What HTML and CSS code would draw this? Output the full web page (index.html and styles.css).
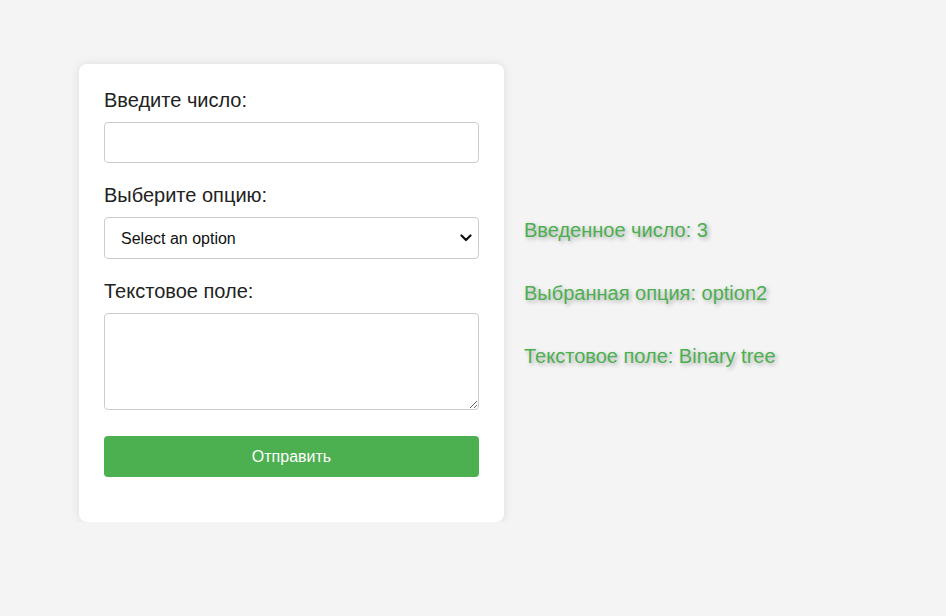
FILE: index.html
```html
<!DOCTYPE html>
<html lang="ru">
<head>
<meta charset="utf-8">
<title>Форма</title>
<link rel="stylesheet" href="styles.css">
</head>
<body>
<div class="page">
  <form class="card">
    <label class="label" for="num">Введите число:</label>
    <input class="field" id="num" type="number">
    <label class="label" for="opt">Выберите опцию:</label>
    <select class="field select" id="opt">
      <option>Select an option</option>
      <option>option1</option>
      <option>option2</option>
    </select>
    <label class="label" for="txt">Текстовое поле:</label>
    <textarea class="field area" id="txt"></textarea>
    <button class="submit" type="button">Отправить</button>
  </form>
  <div class="results">
    <p class="result">Введенное число: 3</p>
    <p class="result">Выбранная опция: option2</p>
    <p class="result">Текстовое поле: Binary tree</p>
  </div>
</div>
</body>
</html>
```
FILE: styles.css
```css
html, body {
  margin: 0;
  padding: 0;
}
body {
  background: #f4f4f4;
  font-family: "Liberation Sans", Arial, sans-serif;
  color: #222;
}
.page {
  display: flex;
  align-items: center;
  gap: 20px;
  padding: 64px 0 0 79px;
}
.card {
  box-sizing: border-box;
  width: 425px;
  height: 458px;
  background: #fff;
  border-radius: 8px;
  box-shadow: 0 0 10px rgba(0, 0, 0, 0.1);
  padding: 25px 25px;
  display: flex;
  flex-direction: column;
}
.label {
  font-size: 20px;
  line-height: 23px;
  margin-bottom: 10px;
}
.field {
  box-sizing: border-box;
  width: 375px;
  height: 41px;
  border: 1px solid #ccc;
  border-radius: 4px;
  font-family: "Liberation Sans", Arial, sans-serif;
  font-size: 16px;
  padding: 10px;
  margin: 0 0 21px 0;
  background: #fff;
}
.select {
  height: 42px;
  padding: 0 16px;
  color: #111;
  appearance: none;
  -webkit-appearance: none;
  background-image: url("data:image/svg+xml,%3Csvg xmlns='http://www.w3.org/2000/svg' width='12' height='8' viewBox='0 0 12 8'%3E%3Cpath d='M1.5 1.5 L6 6 L10.5 1.5' fill='none' stroke='%23111' stroke-width='2.2' stroke-linecap='round' stroke-linejoin='round'/%3E%3C/svg%3E");
  background-repeat: no-repeat;
  background-position: right 6px center;
  background-size: 12px 8px;
}
.area {
  height: 97px;
  resize: vertical;
  margin-bottom: 26px;
}
.submit {
  box-sizing: border-box;
  width: 375px;
  height: 41px;
  border: none;
  border-radius: 4px;
  background: #4caf50;
  color: #fff;
  font-family: "Liberation Sans", Arial, sans-serif;
  font-size: 16px;
  cursor: pointer;
}
.results {
  display: flex;
  flex-direction: column;
  gap: 40px;
}
.result {
  margin: 0;
  font-size: 20px;
  line-height: 23px;
  color: #4caf50;
  text-shadow: 2px 2px 4px rgba(0, 0, 0, 0.3);
}
```
